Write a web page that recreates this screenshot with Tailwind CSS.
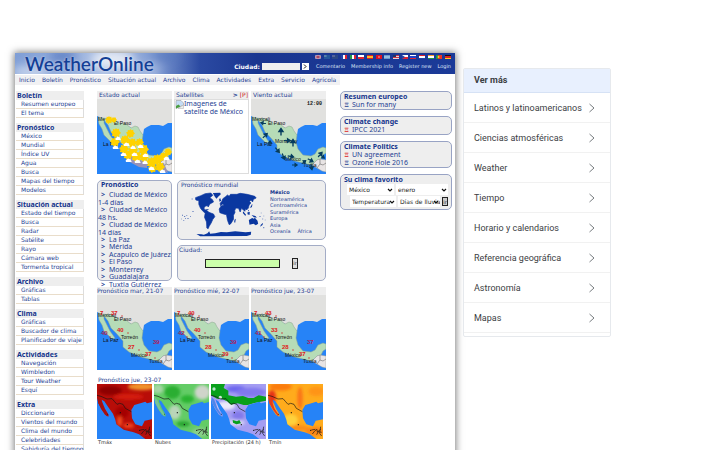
<!DOCTYPE html>
<html lang="es">
<head>
<meta charset="utf-8">
<meta name="viewport" content="width=device-width, initial-scale=1">
<title>WeatherOnline</title>
<script src="https://cdn.jsdelivr.net/npm/@tailwindcss/browser@4"></script>
</head>
<body class="bg-white">
<!-- Shared drawings -->
<svg class="absolute size-0" aria-hidden="true">
  <defs>
    <filter id="soft" x="-50%" y="-50%" width="200%" height="200%"><feGaussianBlur stdDeviation="5"/></filter>
    <filter id="cloud" x="-50%" y="-100%" width="200%" height="300%"><feGaussianBlur stdDeviation="5"/></filter>
    <symbol id="land" viewBox="0 0 75 75">
      <rect width="75" height="75" fill="#2683f7"/>
      <path d="M0 0H75V24L71 24 66 27 62 26 54 26 50 28 47 30 46 36 41 32 34 29 29 26 22 24 14 20 4 19 0 17Z" fill="#e1e1df"/>
      <path d="M1 18 6 19 14 20 22 24 29 25 34 29 38 27 41 28 43 32 46 36 45 43 47 50 52 56 60 57 64 55 67 50 72 48 75 49V54L72 56 70 60 66 61 64 63 61 66 56 65 44 62 32 57 26 52 26 46 19 38 14 33 11 26 7 21 7 24 9 28 13 36 18 43 15 44 11 40 7 36 5 30 2 25Z" fill="#b6dcb7" stroke="#8aa58f" stroke-width=".5"/>
      <path d="M61 66 64 63 66 61 69 60 75 61V73L71 72 66 69Z" fill="#e8e4e4" stroke="#999988" stroke-width=".4"/>
      <path d="M66 69 69 65 72 66 75 64M69 60V65" fill="none" stroke="#555" stroke-width=".5"/>
    </symbol>
    <symbol id="cities" viewBox="0 0 75 75">
      <g font-family="Liberation Sans, sans-serif" font-size="5" fill="#111"><text x="1" y="22">Mexicali</text><text x="17" y="26">El Paso</text><text x="6" y="47">La Paz</text><text x="24" y="44">Torreón</text><text x="34" y="62">México</text><text x="52" y="68">Tuxtla</text></g>
      <g fill="#cc2222"><circle cx="31" cy="38" r=".7"/><circle cx="42" cy="55" r=".7"/><circle cx="13" cy="42" r=".7"/><circle cx="25" cy="21" r=".7"/><circle cx="58" cy="63" r=".7"/></g>
    </symbol>
    <symbol id="sunny" viewBox="0 0 10 10"><path d="M5 0 6 1.300 8 .8 8.300 3 10 5 8.300 6.500 8 9 6 8.500 4 10 3 8.300 .8 8 1.500 6 0 4 1.800 3 2 1 4 1.400Z" fill="#ffd200"/></symbol>
    <symbol id="puff" viewBox="0 0 8 5"><path d="M1 5Q-.5 2.500 2 2 3.500-.5 5 1.500 7 1 7 3 9 4.500 7 5Z" fill="#fff"/></symbol>
    <symbol id="arrow" viewBox="0 0 8 8"><path d="M4 8V2M2 4 4 1 6 4Z" fill="#063c5e" stroke="#063c5e" stroke-width="1.400"/></symbol>
    <symbol id="sea" viewBox="0 0 165 165">
      <path d="M165 54 150 58 145 53 130 58 112 63 103 78 105 103 115 121 135 127 143 110 165 106Z" fill="#2683f7"/>
      <path d="M0 42 4 58 12 74 24 92 34 98 35 92 24 74 16 55 14 47 22 52 34 70 48 89 55 107 58 121 80 137 110 145 126 151 145 165H0Z" fill="#2683f7"/>
      <path d="M0 34 12 37 30 45 45 44 52 52 60 61 68 58 78 61 85 73 103 83M133 150l8-10 6-4 1 8 10-8M130 138l12-2M146 152l5-9 10 2M158 128l-3 20 6 8" fill="none" stroke="#151515" stroke-width="2"/>
      <g fill="#111"><circle cx="31" cy="91" r="2"/><circle cx="70" cy="86" r="2"/><circle cx="91" cy="122" r="2"/><circle cx="128" cy="139" r="2"/></g>
    </symbol>
    <symbol id="next" viewBox="0 0 8 10"><path d="M1.500 1 6 5 1.500 9" fill="none" stroke="#777c80" stroke-width="1"/></symbol>
    <symbol id="down" viewBox="0 0 6 6"><path d="M1 2 3 4 5 2" fill="none" stroke="#111" stroke-width="1.200"/></symbol>
  </defs>
</svg>

<div class="flex h-screen items-start gap-2 overflow-hidden pt-[53px] pr-[109px] pl-[15px] font-['DejaVu_Sans',sans-serif] text-[6px] leading-[8px] text-[#1f3f93]">
  <main class="min-h-[600px] min-w-0 flex-1 bg-white shadow-[0_0_7px_1px_rgba(0,0,0,0.5)]">
    <header class="relative flex h-[21px] justify-between bg-[#1d3a94] text-white">
      <svg class="absolute inset-0 h-full w-full" preserveAspectRatio="none" viewBox="0 0 440 22" aria-hidden="true">
        <defs><linearGradient id="sky"><stop offset="0" stop-color="#7f9ed6"/><stop offset=".2" stop-color="#a9bde2"/><stop offset=".32" stop-color="#7f9bd3"/><stop offset=".42" stop-color="#2b4aa2"/><stop offset=".55" stop-color="#1a3690"/><stop offset="1" stop-color="#1b3a98"/></linearGradient></defs>
        <rect width="440" height="22" fill="url(#sky)"/>
        <g filter="url(#cloud)"><ellipse cx="15" cy="20" rx="18" ry="7" fill="#dfe7f5" opacity=".7"/><ellipse cx="48" cy="3" rx="14" ry="6" fill="#3d63b5" opacity=".6"/><ellipse cx="98" cy="7" rx="22" ry="10" fill="#f4f6fa" opacity=".8"/><ellipse cx="126" cy="18" rx="20" ry="7" fill="#b5c6e8" opacity=".7"/><ellipse cx="150" cy="3" rx="14" ry="6" fill="#5374bd" opacity=".6"/></g>
      </svg>
      <a href="#" class="relative pl-[10px] font-['Lato',sans-serif] text-[19px] leading-[22px] font-semibold text-[#143f96] [text-shadow:0_0_2px_rgba(255,255,255,0.6)]">WeatherOnline</a>
      <div class="relative flex flex-col gap-[3px] pt-[2px] pr-[4px]">
        <svg class="h-[5px] w-[136px] self-end" viewBox="0 0 136 5" aria-hidden="true">
          <path fill="#c9c4dc" d="M0 0h6v4H0z"/><path d="M0 0 6 4M6 0 0 4" stroke="#334488" stroke-width=".6"/><path d="M0 2h6M3 0v4" stroke="#cc2233" stroke-width=".7"/>
          <path fill="#24579b" d="M9 0h6v4H9z"/><path stroke="#88aabb" stroke-width=".6" d="M9 1h3M10 0v2"/>
          <path fill="#2b4785" d="M17 0h6v4h-6z"/><path stroke="#bbaacc" stroke-width=".6" d="M17 1h3"/>
          <path fill="#fff" d="M26 0h6v4h-6z"/><path fill="#24a" d="M26 0h2v4h-2z"/><path fill="#d23" d="M30 0h2v4h-2z"/>
          <path fill="#fff" d="M35 0h6v4h-6z"/><path fill="#294" d="M35 0h2v4h-2z"/><path fill="#d23" d="M39 0h2v4h-2z"/>
          <path fill="#fff" d="M43 0h6v2h-6z"/><path fill="#d23" d="M43 2h6v2h-6z"/>
          <path fill="#fb2" d="M52 0h6v4h-6z"/><path fill="#d22" d="M52 0h6v1h-6zM52 3h6v1h-6z"/>
          <path fill="#d12" d="M61 0h6v4h-6z"/><circle cx="64" cy="2" r=".8" fill="#fbb"/>
          <path fill="#69c" d="M69 0h6v4h-6z"/><path fill="#cde" d="M69 1.500h6v1h-6z"/>
          <path fill="#e9d5d9" d="M78 0h6v4h-6z"/><path fill="#c34" d="M78 0h6v1h-6zM78 2h6v1h-6z"/><path fill="#236" d="M78 0h3v2h-3z"/>
          <path fill="#fff" d="M87 0h6v2h-6z"/><path fill="#d23" d="M87 2h6v2h-6z"/><path fill="#24a" d="m87 0 3 2-3 2z"/>
          <path fill="#fff" d="M95 0h6v1h-6z"/><path fill="#24c" d="M95 1h6v2h-6z"/><path fill="#d23" d="M95 3h6v1h-6z"/>
          <path fill="#fff" d="M104 0h6v4h-6z"/><path fill="#d23" d="M104 0h6v1h-6z"/><path fill="#24a" d="M104 3h6v1h-6z"/>
          <path fill="#fff" d="M113 0h6v4h-6z"/><path fill="#f93" d="M113 0h6v1h-6z"/><path fill="#294" d="M113 3h6v1h-6z"/>
          <path fill="#e32" d="M121 0h6v4h-6z"/><path fill="#294" d="M121 0h2v4h-2z"/><circle cx="123.500" cy="2" r="1" fill="#fc3"/>
          <path fill="#111" d="M130 0h6v2h-6z"/><path fill="#d22" d="M130 1h6v2h-6z"/><path fill="#fc2" d="M130 3h6v1h-6z"/>
        </svg>
        <div class="flex items-center text-[5px] leading-[7px]">
          <label for="q" class="pr-[2px] text-[6px] font-bold">Ciudad:</label>
          <input id="q" class="h-[7px] w-[38px] bg-[#efefef] text-black">
          <button aria-label="Buscar" class="ml-[2px] flex h-[7px] w-[7px] items-center justify-center bg-white"><svg class="h-[5px] w-[4px]" viewBox="0 0 4 5"><path d="M1 .5 3 2.500 1 4.500" fill="none" stroke="#111"/></svg></button>
          <nav class="flex gap-[6px] pl-[7px] whitespace-nowrap text-[#dde5f7]"><a href="#">Comentario</a><a href="#">Membership info</a><a href="#">Register new</a><a href="#">Login</a></nav>
        </div>
      </div>
    </header>
    <nav class="mt-px flex w-fit gap-[7px] bg-[#f1f1f3] px-[4px] py-px whitespace-nowrap">
      <a href="#">Inicio</a><a href="#">Boletín</a><a href="#">Pronóstico</a><a href="#">Situación actual</a><a href="#">Archivo</a><a href="#">Clima</a><a href="#">Actividades</a><a href="#">Extra</a><a href="#">Servicio</a><a href="#">Agrícola</a>
    </nav>

    <div class="flex items-start pt-[6px] pr-[3px]">
      <!-- Section menu -->
      <aside class="mr-[13px] ml-px flex w-[68px] shrink-0 flex-col gap-[5px] whitespace-nowrap [&_a]:block [&_a]:h-[9px] [&_a]:border-r [&_a]:border-b [&_a]:border-r-[#ddd] [&_a]:border-b-[#e9ddca] [&_a]:pl-[5px] [&_h2]:h-[9px] [&_h2]:bg-[#eee] [&_h2]:pl-px [&_h2]:font-['Noto_Sans'] [&_h2]:text-[7px] [&_h2]:leading-[9px] [&_h2]:font-bold [&_h2]:text-[#14348c]">
        <section><h2>Boletín</h2><a href="#">Resumen europeo</a><a href="#">El tema</a></section>
        <section><h2>Pronóstico</h2><a href="#">México</a><a href="#">Mundial</a><a href="#">Índice UV</a><a href="#">Agua</a><a href="#">Busca</a><a href="#">Mapas del tiempo</a><a href="#">Modelos</a></section>
        <section><h2>Situación actual</h2><a href="#">Estado del tiempo</a><a href="#">Busca</a><a href="#">Radar</a><a href="#">Satélite</a><a href="#">Rayo</a><a href="#">Cámara web</a><a href="#">Tormenta tropical</a></section>
        <section><h2>Archivo</h2><a href="#">Gráficas</a><a href="#">Tablas</a></section>
        <section><h2>Clima</h2><a href="#">Gráficas</a><a href="#">Buscador de clima</a><a href="#">Planificador de viaje</a></section>
        <section><h2>Actividades</h2><a href="#">Navegación</a><a href="#">Wimbledon</a><a href="#">Tour Weather</a><a href="#">Esquí</a></section>
        <section><h2>Extra</h2><a href="#">Diccionario</a><a href="#">Vientos del mundo</a><a href="#">Clima del mundo</a><a href="#">Celebridades</a><a href="#">Sabiduría del tiempo</a></section>
      </aside>

      <!-- Maps -->
      <div class="w-[229px] shrink-0">
        <div class="grid grid-cols-3 gap-[2px]">
          <section class="bg-[#eee]"><h3 class="pl-[2px]">Estado actual</h3>
            <svg class="w-full" viewBox="0 0 75 75">
              <use href="#land"/><g font-family="Liberation Sans, sans-serif" font-size="5" fill="#111"><text x="1" y="22">Me</text><text x="17" y="26">El Paso</text><text x="6" y="47">La Paz</text></g>
              <path d="M29 61 34 57 50 64 50 69 42 68ZM60 66 67 64 71 74 65 72Z" fill="#9a93b8"/>
              <use href="#sunny" x="8" y="17" width="8" height="8"/><use href="#sunny" x="14" y="18" width="6" height="6"/>
              <use href="#sunny" x="29" y="30" width="9" height="9"/><use href="#sunny" x="14" y="29" width="10" height="10"/><use href="#sunny" x="13" y="38" width="10" height="10"/><use href="#sunny" x="23" y="36" width="10" height="10"/><use href="#sunny" x="30" y="39" width="10" height="10"/><use href="#sunny" x="38" y="39" width="9" height="9"/><use href="#sunny" x="22" y="45" width="10" height="10"/><use href="#sunny" x="31" y="46" width="10" height="10"/><use href="#sunny" x="41" y="45" width="11" height="11"/><use href="#sunny" x="26" y="51" width="10" height="10"/><use href="#sunny" x="34" y="52" width="11" height="11"/><use href="#sunny" x="42" y="53" width="10" height="10"/><use href="#sunny" x="49" y="58" width="11" height="11"/><use href="#sunny" x="55" y="55" width="11" height="11"/><use href="#sunny" x="58" y="63" width="10" height="10"/><use href="#sunny" x="62" y="53" width="9" height="9"/><use href="#sunny" x="67" y="49" width="8" height="8"/><use href="#sunny" x="51" y="65" width="9" height="9"/>
              <use href="#puff" x="15" y="46" width="7" height="4"/><use href="#puff" x="18" y="37" width="6" height="4"/><use href="#puff" x="26" y="43" width="7" height="4"/><use href="#puff" x="33" y="46" width="6" height="4"/><use href="#puff" x="40" y="45" width="7" height="4"/><use href="#puff" x="23" y="53" width="7" height="4"/><use href="#puff" x="34" y="53" width="7" height="4"/><use href="#puff" x="45" y="54" width="7" height="4"/><use href="#puff" x="28" y="59" width="7" height="4"/><use href="#puff" x="37" y="60" width="7" height="4"/><use href="#puff" x="45" y="61" width="6" height="4"/><use href="#puff" x="51" y="67" width="7" height="4"/><use href="#puff" x="62" y="70" width="7" height="4"/><use href="#puff" x="66" y="57" width="7" height="4"/>
            </svg></section>
          <section class="flex flex-col bg-[#eee]"><h3 class="flex pl-[2px]">Satellites<a href="#" class="ml-auto pr-px"><b>&gt;</b> <span class="text-[#c22]">[P]</span></a></h3>
            <div class="flex flex-1 border border-[#ddd] bg-white">
              <svg class="h-[9px] w-[9px] shrink-0" viewBox="0 0 9 9"><path d="M1 .5H6L8.500 3V5L1 8.500Z" fill="#c5dcf5" stroke="#9a9a9a" stroke-width=".6"/><path d="M1 8.500V6L3.500 4.500 5.500 6.500Z" fill="#4a9e3f"/><path d="M8.500 5V8.500H3Z" fill="#eee" stroke="#aaa" stroke-width=".5"/></svg>
              <p class="font-['Noto_Sans'] text-[7px] leading-[8px]">Imagenes de satelite de México</p>
            </div></section>
          <section class="bg-[#eee]"><h3 class="pl-[2px]">Viento actual</h3>
            <svg class="w-full" viewBox="0 0 75 75">
              <use href="#land"/><g font-family="Liberation Sans, sans-serif" font-size="5" fill="#111"><text x="1" y="22">Mexicali</text><text x="17" y="26">El Paso</text><text x="6" y="47">La Paz</text><text x="24" y="44">Monterrey</text><text x="34" y="62">México</text><text x="52" y="68">Tuxtla</text></g>
              <text x="56" y="6" font-family="Liberation Mono, monospace" font-size="5" font-weight="700" fill="#111">12:00</text>
              <use href="#arrow" x="26" y="28" width="8" height="9"/><use href="#arrow" x="38" y="39" width="8" height="9"/><use href="#arrow" x="11" y="32" width="7" height="8" transform="rotate(45 14 36)"/><use href="#arrow" x="9" y="20" width="6" height="8" transform="rotate(-80 12 24)"/><use href="#arrow" x="16" y="40" width="6" height="8"/><use href="#arrow" x="32" y="38" width="7" height="7" transform="rotate(90 36 42)"/><use href="#arrow" x="24" y="47" width="7" height="8" transform="rotate(140 27 51)"/><use href="#arrow" x="28" y="54" width="7" height="8" transform="rotate(160 32 58)"/><use href="#arrow" x="36" y="54" width="7" height="8" transform="rotate(100 40 58)"/><use href="#arrow" x="41" y="62" width="6" height="8" transform="rotate(90 44 66)"/><use href="#arrow" x="50" y="59" width="6" height="8" transform="rotate(50 53 63)"/><use href="#arrow" x="57" y="57" width="7" height="8" transform="rotate(120 60 61)"/><use href="#arrow" x="58" y="64" width="7" height="8" transform="rotate(170 61 68)"/><use href="#arrow" x="66" y="51" width="7" height="8" transform="rotate(40 69 55)"/><use href="#arrow" x="69" y="55" width="6" height="7" transform="rotate(130 72 58)"/>
            </svg></section>
        </div>

        <div class="mt-[6px] flex h-[101px] gap-[5px]">
          <section class="w-[75px] shrink-0 rounded-[5px] border border-[#a3acc6] bg-[#eee] font-['Noto_Sans'] text-[7px]">
            <h3 class="pl-[3px] leading-[8px] font-bold text-[#14348c]">Pronóstico</h3>
            <div class="pt-[2px] whitespace-nowrap [&_a]:block [&_a]:h-[15px] [&_a]:leading-[8px] [&_b]:mr-[4px] [&_b]:ml-[3px] [&_.s]:h-[8px] [&_.t]:h-[7px]">
              <a href="#"><b>&gt;</b>Ciudad de México<br>1-4 días</a><a href="#"><b>&gt;</b>Ciudad de México<br>48 hs.</a><a href="#"><b>&gt;</b>Ciudad de México<br>14 días</a><a href="#" class="t"><b>&gt;</b>La Paz</a><a href="#" class="s"><b>&gt;</b>Mérida</a><a href="#" class="t"><b>&gt;</b>Acapulco de Juárez</a><a href="#" class="s"><b>&gt;</b>El Paso</a><a href="#" class="t"><b>&gt;</b>Monterrey</a><a href="#" class="s"><b>&gt;</b>Guadalajara</a><a href="#" class="t"><b>&gt;</b>Tuxtla Gutiérrez</a>
            </div>
          </section>
          <div class="flex min-w-0 flex-1 flex-col gap-[5px]">
            <section class="h-[60px] rounded-[5px] border border-[#a3acc6] bg-[#eee]">
              <h3 class="pl-[3px]">Pronóstico mundial</h3>
              <div class="flex gap-[3px] pl-[2px]">
                <svg class="mt-[3px] h-[45px] w-[87px] shrink-0" viewBox="30 50 260 135" fill="#0a37a0" role="img" aria-label="Mapa mundial">
                  <path stroke="#0a37a0" stroke-width="2" d="M76 67 92 61 105 55 122 53 128 60 119 67 127 73 130 80 119 86 114 95 112 91 106 92 101 98 104 103 110 105 116 111 130 116 134 124 128 132 123 143 117 153 114 160 110 158 109 140 103 126 105 114 97 106 91 99 86 87 86 76 77 74Z"/>
                  <path d="M128 53 150 52 152 57 144 64 139 70 134 64Z"/><path stroke="#0a37a0" stroke-width="2" d="M150 84 155 78 158 70 166 64 172 59 177 63 181 57 200 57 210 54 231 57 254 63 258 68 250 72 247 80 243 74 238 78 242 83 237 89 234 99 229 104 226 100 224 108 219 103 214 99 210 110 205 99 197 98 193 107 195 110 190 120 190 132 182 145 177 148 172 135 169 118 160 116 149 112 147 101 153 92 162 89 158 86 151 91Z"/>
                  <path d="M236 134 246 128 251 130 254 127 262 136 264 145 257 150 250 145 238 148ZM219 108 228 119 225 121 218 113ZM232 111 239 110 238 119 232 117ZM244 119 256 122 260 127 251 126ZM193 133 197 130 195 142 192 141ZM272 148 279 142 277 149 270 154ZM238 97 243 92 244 88 247 87 245 96ZM147 72 150 68 153 76 148 79ZM233 105 236 104 237 109Z"/>
                  <path d="M79 176 94 177 101 178 112 174 117 168 120 175 135 174 152 170 170 171 195 168 226 171 243 169 242 178 230 182 90 183Z"/>
                  <path d="M36 118h2v3h-2zM42 122h3v2h-3zM49 119h2v2h-2zM33 130h2v2h-2zM40 134h2v2h-2zM52 129h3v2h-3zM45 128h2v2h-2zM60 123h2v2h-2zM64 70h4v2h-4zM67 107h3v2h-3zM272 112h2v2h-2zM280 121h2v2h-2zM276 130h3v2h-3zM268 123h3v2h-3zM284 133h2v2h-2zM280 155h2v4h-2zM108 101h7v2h-7z"/>
                </svg>
                <div class="flex flex-col text-[5px] leading-[6px] [&_a]:mb-px [&_a:nth-child(2n)]:mb-0"><a href="#" class="font-bold text-[#14348c]">México</a><a href="#">Norteamérica</a><a href="#">Centroamérica</a><a href="#">Suramérica</a><a href="#">Europa</a><a href="#">Asia</a><span class="flex gap-[7px]"><a href="#">Oceanía</a><a href="#">África</a></span></div>
              </div>
            </section>
            <section class="flex-1 rounded-[5px] border border-[#a3acc6] bg-[#eee]">
              <label for="city" class="block pl-px">Ciudad:</label>
              <div class="flex items-center justify-between pt-[4px] pr-[27px] pl-[27px]">
                <input id="city" class="h-[9px] w-[75px] border border-[#222] bg-[#ccffaa]">
                <button aria-label="Ir" class="flex h-[11px] w-[6px] items-center justify-center border border-[#222] bg-[#ddd] text-[5px] leading-[5px] text-[#333]">ir</button>
              </div>
            </section>
          </div>
        </div>

        <div class="mt-[6px] grid grid-cols-3 gap-[2px] whitespace-nowrap">
          <section class="bg-[#eee]"><h3>Pronóstico mar, 21-07</h3><svg class="w-full" viewBox="0 0 75 75"><use href="#land"/><use href="#cities"/><g font-family="Liberation Sans, sans-serif" font-weight="700" font-size="6" fill="#e01818"><text x="3" y="20">7</text><text x="14" y="20">37</text><text x="20" y="37">40</text><text x="4" y="40" fill="#a52450">40</text><text x="31" y="54">27</text><text x="56" y="49" fill="#b0205a">39</text><text x="48" y="61">37</text></g></svg></section>
          <section class="bg-[#eee]"><h3>Pronóstico mié, 22-07</h3><svg class="w-full" viewBox="0 0 75 75"><use href="#land"/><use href="#cities"/><g font-family="Liberation Sans, sans-serif" font-weight="700" font-size="6" fill="#e01818"><text x="3" y="20">7</text><text x="14" y="20">40</text><text x="20" y="37">40</text><text x="4" y="40" fill="#a52450">42</text><text x="31" y="54">28</text><text x="56" y="49" fill="#b0205a">39</text><text x="48" y="61">39</text></g></svg></section>
          <section class="bg-[#eee]"><h3>Pronóstico jue, 23-07</h3><svg class="w-full" viewBox="0 0 75 75"><use href="#land"/><use href="#cities"/><g font-family="Liberation Sans, sans-serif" font-weight="700" font-size="6" fill="#e01818"><text x="3" y="20">7</text><text x="14" y="20">43</text><text x="20" y="37">33</text><text x="4" y="40" fill="#a52450">41</text><text x="31" y="54">28</text><text x="56" y="49" fill="#b0205a">37</text><text x="48" y="61">37</text></g></svg></section>
        </div>

        <h3 class="mt-[6px] pl-px">Pronóstico jue, 23-07</h3>
        <div class="flex gap-[2px] text-[5px] leading-[6px] text-[#333] [&_figure]:w-[55px] [&_figcaption]:pl-px [&_figcaption]:whitespace-nowrap">
          <figure><svg class="w-full" viewBox="0 0 165 165"><rect width="165" height="165" fill="#b80d08"/><g filter="url(#soft)"><ellipse cx="135" cy="8" rx="42" ry="11" fill="#f0922a"/><ellipse cx="40" cy="20" rx="35" ry="14" fill="#8e0505"/><ellipse cx="95" cy="38" rx="45" ry="9" fill="#d41a0d"/><ellipse cx="75" cy="85" rx="20" ry="18" fill="#a50606"/><ellipse cx="68" cy="112" rx="8" ry="15" fill="#f04a1c"/><ellipse cx="95" cy="125" rx="16" ry="7" fill="#f0431c"/><ellipse cx="130" cy="145" rx="30" ry="14" fill="#b31010"/></g><use href="#sea"/><path d="M2 40 10 48 20 74 32 92 30 97 15 77 4 58Z" fill="#a51111"/></svg><figcaption>Tmáx</figcaption></figure>
          <figure><svg class="w-full" viewBox="0 0 165 165"><rect width="165" height="165" fill="#63cc66"/><g filter="url(#soft)"><ellipse cx="55" cy="25" rx="24" ry="20" fill="#2cae32"/><ellipse cx="100" cy="45" rx="20" ry="12" fill="#2cb433"/><ellipse cx="145" cy="25" rx="23" ry="22" fill="#cfd4ca"/><ellipse cx="12" cy="15" rx="16" ry="14" fill="#a6d5a4"/><ellipse cx="62" cy="85" rx="18" ry="22" fill="#b9d5b9"/><ellipse cx="88" cy="120" rx="20" ry="8" fill="#2ba530"/><ellipse cx="138" cy="145" rx="24" ry="14" fill="#89cf8a"/></g><use href="#sea"/><path d="M2 40 10 48 20 74 32 92 30 97 15 77 4 58Z" fill="#76c29a"/></svg><figcaption>Nubes</figcaption></figure>
          <figure><svg class="w-full" viewBox="0 0 165 165"><rect width="165" height="165" fill="#a49df2"/><g filter="url(#soft)"><ellipse cx="75" cy="15" rx="30" ry="10" fill="#6e68ee"/><ellipse cx="120" cy="25" rx="45" ry="14" fill="#8178ee"/><ellipse cx="45" cy="65" rx="28" ry="13" fill="#ece9fa"/><ellipse cx="82" cy="95" rx="18" ry="14" fill="#837aea"/><ellipse cx="72" cy="116" rx="30" ry="9" fill="#d8d4f5"/></g><path d="M0 0H42L38 12 52 20 52 34 75 38 96 36 112 42 128 42 143 34 165 38V50L130 57 110 63 98 63 80 58 60 62 48 52 35 46 18 44 0 34Z" fill="#08a01b"/><path d="M65 108 78 112 85 108 90 118 76 121 66 116Z" fill="#08a01b"/><circle cx="9" cy="15" r="5" fill="#b9e3ce"/><circle cx="28" cy="40" r="5" fill="#d4ecd9"/><use href="#sea"/><path d="M2 40 10 48 20 74 32 92 30 97 15 77 4 58Z" fill="#4d87e9"/></svg><figcaption>Precipitación (24 h)</figcaption></figure>
          <figure><svg class="w-full" viewBox="0 0 165 165"><rect width="165" height="165" fill="#ffab1c"/><g filter="url(#soft)"><ellipse cx="38" cy="8" rx="34" ry="12" fill="#fb7b10"/><ellipse cx="12" cy="38" rx="12" ry="20" fill="#e53216"/><ellipse cx="96" cy="42" rx="8" ry="34" fill="#fa7412"/><ellipse cx="145" cy="22" rx="24" ry="14" fill="#ff9412"/><ellipse cx="68" cy="108" rx="22" ry="18" fill="#ffd13b"/><ellipse cx="90" cy="132" rx="30" ry="8" fill="#fb8b14"/><ellipse cx="140" cy="142" rx="28" ry="14" fill="#fb8613"/></g><use href="#sea"/><path d="M2 40 10 48 20 74 32 92 30 97 15 77 4 58Z" fill="#e63c1c"/></svg><figcaption>Tmín</figcaption></figure>
        </div>
      </div>

      <!-- News boxes -->
      <div class="ml-[14px] flex min-w-0 flex-1 flex-col gap-[6px] font-['Noto_Sans'] text-[7px] leading-[8px] [&_section]:rounded-[5px] [&_section]:border [&_section]:border-[#98a3c4] [&_section]:bg-[#eee] [&_section]:px-[3px] [&_h3]:font-bold [&_h3]:text-[#14348c] [&_h3]:leading-[9px] [&_a]:flex [&_a]:items-center [&_a]:gap-[3px] [&_a]:h-[8px] [&_i]:w-[5px] [&_i]:text-center [&_i]:font-['DejaVu_Serif'] [&_i]:text-[6px] [&_i]:font-bold [&_i]:not-italic">
        <section><h3>Resumen europeo</h3><a href="#"><i>Ξ</i>Sun for many</a></section>
        <section><h3>Climate change</h3><a href="#"><i class="text-[#d22]">Ξ</i>IPCC 2021</a></section>
        <section><h3>Climate Politics</h3><a href="#"><i class="text-[#d22]">Ξ</i>UN agreement</a><a href="#"><i>Ξ</i>Ozone Hole 2016</a></section>
        <section class="pb-[2px]"><h3>Su clima favorito</h3>
          <form class="flex flex-col gap-px pl-[3px] font-['DejaVu_Sans'] text-[6px] text-[#222] [&_select]:block [&_select]:h-[11px] [&_select]:w-full [&_select]:appearance-none [&_select]:bg-white [&_select]:pl-[2px] [&_span]:relative [&_span]:h-[11px] [&_svg]:absolute [&_svg]:top-[3px] [&_svg]:right-px [&_svg]:size-[6px]">
            <div class="flex gap-[2px]"><span class="w-[47px]"><select aria-label="País"><option>México</option></select><svg><use href="#down"/></svg></span><span class="flex-1"><select aria-label="Mes"><option>enero</option></select><svg><use href="#down"/></svg></span></div>
            <div class="flex items-center gap-[2px] pl-[3px]"><span class="w-[46px]"><select aria-label="Variable"><option>Temperatura</option></select><svg><use href="#down"/></svg></span><span class="flex-1"><select aria-label="Dato"><option>Días de lluvia</option></select><svg><use href="#down"/></svg></span><button aria-label="Ir" class="h-[9px] w-[6px] border border-[#222] bg-[#ccc] text-[5px] leading-[6px]">ir</button></div>
          </form>
        </section>
      </div>
    </div>
  </main>

  <nav aria-label="Ver más" class="mt-[15px] w-[148px] shrink-0 rounded-[2px] border border-[#e6e9ed] bg-white pb-[3px] font-['Roboto',sans-serif] text-[9px] text-[#3c4043] [&_a]:flex [&_a]:h-[30px] [&_a]:items-center [&_a]:justify-between [&_a]:border-b [&_a]:border-[#f1f1f1] [&_a]:pr-[14px] [&_a]:pl-[10px] [&_svg]:h-[10px] [&_svg]:w-[8px]">
    <h2 class="h-[24px] border-b border-[#d6e2f5] bg-[#e8f0fe] pl-[10px] leading-[22px] font-bold">Ver más</h2>
    <a href="#">Latinos y latinoamericanos<svg><use href="#next"/></svg></a>
    <a href="#">Ciencias atmosféricas<svg><use href="#next"/></svg></a>
    <a href="#">Weather<svg><use href="#next"/></svg></a>
    <a href="#">Tiempo<svg><use href="#next"/></svg></a>
    <a href="#">Horario y calendarios<svg><use href="#next"/></svg></a>
    <a href="#">Referencia geográfica<svg><use href="#next"/></svg></a>
    <a href="#">Astronomía<svg><use href="#next"/></svg></a>
    <a href="#">Mapas<svg><use href="#next"/></svg></a>
  </nav>
</div>
</body>
</html>
